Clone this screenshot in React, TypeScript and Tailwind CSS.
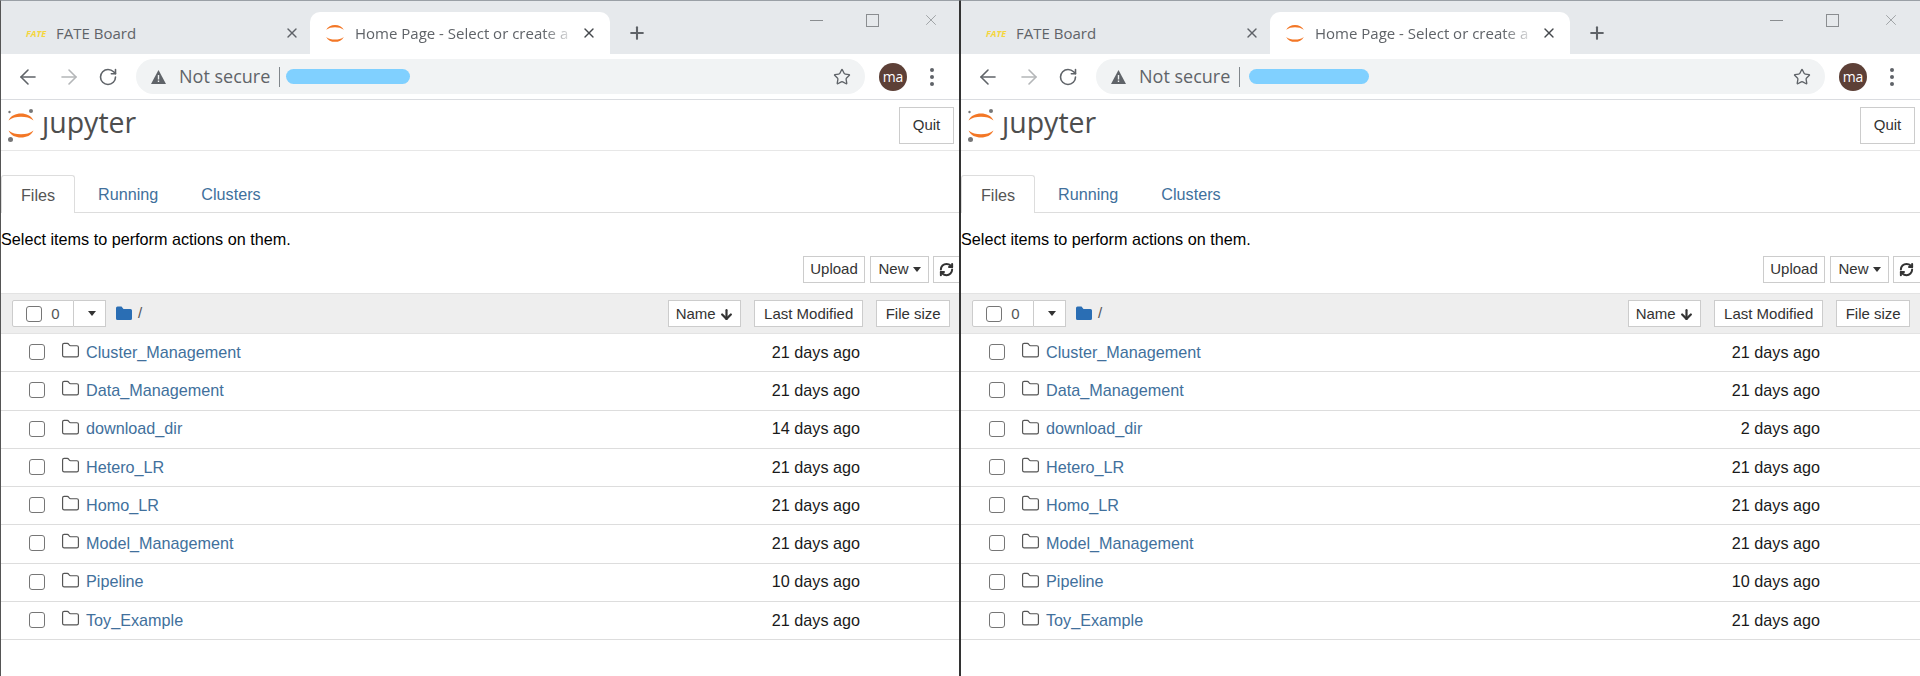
import { ArrowDown, ArrowLeft, ArrowRight, Folder, Plus, RefreshCw, RotateCw, Star, X } from "lucide-react";

const UI_FONT = "font-['Open_Sans','Noto_Sans',sans-serif]";

function JupyterMark({ width, height, dots = false }: { width: number; height: number; dots?: boolean }) {
  return (
    <svg width={width} height={height} viewBox="0 0 28 34" className="shrink-0">
      <path d="M1.5 12.5C4 7.5 8.5 5.5 14 5.5S24 7.500 26.500 12.500C23 9.600 19 8.700 14 8.700S5 9.600 1.500 12.500Z" fill="#f37726" />
      <path d="M1.500 22.500C4 27.500 8.500 29.500 14 29.500S24 27.500 26.500 22.500C23 25.400 19 26.300 14 26.300S5 25.400 1.500 22.500Z" fill="#f37726" />
      {dots && (
        <>
          <circle cx="24" cy="3" r="2" fill="#767677" />
          <circle cx="2.500" cy="4" r="1.200" fill="#767677" />
          <circle cx="3.500" cy="31.500" r="2.500" fill="#767677" />
        </>
      )}
    </svg>
  );
}

function Tabs() {
  return (
    <div className={`flex h-[53px] shrink-0 bg-[#e6e9ec] text-[15px] text-[#5f6368] ${UI_FONT}`}>
      <div className="flex h-[42px] w-[309px] shrink-0 items-center self-end pl-[25px]">
        <span className="w-[20px] text-[9px] leading-none font-bold text-[#f5d63d] italic">FATE</span>
        <span className="ml-[10px]">FATE Board</span>
        <X size={16} strokeWidth={2} className="ml-auto mr-[10px]" />
      </div>
      <div className="flex h-[42px] w-[300px] shrink-0 items-center self-end rounded-t-[10px] bg-white pl-[15px]">
        <JupyterMark width={20} height={24} />
        <span className="ml-[10px] w-[221px] overflow-hidden whitespace-nowrap [mask-image:linear-gradient(to_right,black_85%,transparent)]">
          Home Page - Select or create a
        </span>
        <X size={16} strokeWidth={2} className="ml-[5px] text-[#45484c]" />
      </div>
      <Plus size={20} strokeWidth={2.5} className="ml-[17px] mt-[22px]" />
      <div className="ml-[163px] flex h-[38px] items-center text-[#8a8d90]">
        <div className="h-px w-[13px] bg-[#8a8d90]" />
        <div className="ml-[43px] h-[13px] w-[13px] border border-[#8a8d90]" />
        <X size={18} strokeWidth={1} className="ml-[43px]" />
      </div>
    </div>
  );
}

function AddressBar({ blur }: { blur: string }) {
  return (
    <div className={`flex h-[46px] shrink-0 items-center border-b border-[#dadce0] bg-white text-[#5f6368] ${UI_FONT}`}>
      <ArrowLeft size={24} strokeWidth={1.6} className="ml-[15px]" />
      <ArrowRight size={24} strokeWidth={1.6} className="ml-[17px] text-[#b4b6b8]" />
      <RotateCw size={20} strokeWidth={1.9} className="ml-[17px]" />
      <div className="ml-[18px] flex h-[35px] w-[729px] items-center rounded-full bg-[#f1f3f4] pl-[15px]">
        <svg width="15" height="14" viewBox="0 0 15 14" className="shrink-0">
          <path d="M7.500 0L15 14H0Z" fill="#5f6368" />
          <path d="M6.800 5H8.200V9.500H6.800ZM6.800 10.500H8.200V12H6.800Z" fill="#f1f3f4" />
        </svg>
        <span className="ml-[13px] text-[18px] whitespace-nowrap">Not secure</span>
        <div className="ml-[9px] h-[20px] w-px bg-[#80868b]" />
        <div className={`h-[15px] rounded-full bg-[#80d0ff] ${blur}`} />
        <Star size={18} strokeWidth={1.8} className="ml-auto mr-[14px]" />
      </div>
      <div className="ml-[14px] flex size-[28px] items-center justify-center rounded-full bg-[#5d4037] text-[14px] text-white">ma</div>
      <div className="ml-[23px] flex flex-col gap-[3px]">
        <div className="size-[4px] rounded-full bg-[#5f6368]" />
        <div className="size-[4px] rounded-full bg-[#5f6368]" />
        <div className="size-[4px] rounded-full bg-[#5f6368]" />
      </div>
    </div>
  );
}

function Btn({ className, children }: { className: string; children: React.ReactNode }) {
  return (
    <div className={`flex h-[27px] shrink-0 items-center justify-center border border-[#cccccc] bg-white text-[15px] text-[#333333] ${className}`}>
      {children}
    </div>
  );
}

function Caret() {
  return <span className="ml-[4px] h-0 w-0 border-x-[4.5px] border-t-[5px] border-x-transparent border-t-[#333333]" />;
}

function Panel({ blur, downloadAge, className }: { blur: string; downloadAge: string; className: string }) {
  const rows = [
    ["Cluster_Management", "21 days ago"],
    ["Data_Management", "21 days ago"],
    ["download_dir", downloadAge],
    ["Hetero_LR", "21 days ago"],
    ["Homo_LR", "21 days ago"],
    ["Model_Management", "21 days ago"],
    ["Pipeline", "10 days ago"],
    ["Toy_Example", "21 days ago"],
  ];

  return (
    <div className={`flex h-[676px] w-[960px] shrink-0 flex-col overflow-hidden border-t border-[#9aa0a6] bg-white font-['Liberation_Sans',sans-serif] ${className}`}>
      <Tabs />
      <AddressBar blur={blur} />

      {/* Jupyter header */}
      <div className="flex h-[51px] shrink-0 items-center border-b border-[#e7e7e7] pl-[6px] pr-[5px]">
        <JupyterMark width={28} height={34} dots />
        <span className={`ml-[7px] -mt-[5px] text-[28.500px] leading-none text-[#4e4e4e] ${UI_FONT}`}>ȷupyter</span>
        <Btn className="ml-auto h-[37px] w-[55px]">Quit</Btn>
      </div>

      {/* Tab strip */}
      <div className="mt-[24px] flex h-[38px] shrink-0 border-b border-[#dddddd] text-[16.200px] text-[#41709c]">
        <div className="flex h-[38px] w-[74px] items-center justify-center rounded-t-[3px] border-x border-t border-[#dddddd] bg-white pt-[2px] text-[#555555]">Files</div>
        <div className="ml-[23px] flex h-[37px] items-center pt-[2px]">Running</div>
        <div className="ml-[43px] flex h-[37px] items-center pt-[2px]">Clusters</div>
      </div>

      <p className="mt-[16px] text-[16.200px] leading-[20px] text-black">Select items to perform actions on them.</p>

      <div className="mt-[7px] flex shrink-0 items-center pl-[802px]">
        <Btn className="w-[62px]">Upload</Btn>
        <Btn className="ml-[5px] w-[59px]">
          New
          <Caret />
        </Btn>
        <Btn className="ml-[4px] w-[40px] justify-start pl-[5px]">
          <RefreshCw size={15} strokeWidth={3.2} />
        </Btn>
      </div>

      {/* List header */}
      <div className="mt-[10px] flex h-[41px] shrink-0 items-center border-y border-[#e3e3e3] bg-[#eeeeee] pl-[11px]">
        <Btn className="w-[62px] rounded-l-[2px] pt-[1px] text-[#555555]">
          <input type="checkbox" readOnly className="mr-[9px] size-[16px] appearance-none rounded-[3px] border border-[#767676] bg-white" />0
        </Btn>
        <Btn className="w-[32px] border-l-0">
          <Caret />
        </Btn>
        <svg width="16" height="14" viewBox="0 0 16 14" className="ml-[10px] -mt-[1px]">
          <path d="M0 2a1.500 1.500 0 0 1 1.500-1.500H5.500L7.500 3H14.500A1.500 1.500 0 0 1 16 4.500V12.500A1.500 1.500 0 0 1 14.500 14H1.500A1.500 1.500 0 0 1 0 12.500Z" fill="#2a6eb4" />
        </svg>
        <span className="ml-[6px] text-[15px] text-[#555555]">/</span>
        <Btn className="ml-[526px] w-[73px] pt-[1px]">
          Name
          <ArrowDown size={15} strokeWidth={3.5} className="ml-[3px]" />
        </Btn>
        <Btn className="ml-[13px] w-[109px] pt-[1px]">Last Modified</Btn>
        <Btn className="ml-[13px] w-[74px] pt-[1px]">File size</Btn>
      </div>

      {/* File rows */}
      {rows.map(([name, age]) => (
        <div key={name} className="flex h-[38.250px] shrink-0 items-center border-b border-[#dddddd] pb-[1px] pl-[28px] text-[16.200px]">
          <input type="checkbox" readOnly className="size-[16px] appearance-none rounded-[3px] border border-[#767676] bg-white" />
          <Folder size={19} strokeWidth={1.5} className="ml-[16px] -mt-[3px] text-[#555555]" />
          <span className="ml-[6px] w-[649px] text-[#41709c]">{name}</span>
          <span className="w-[125px] text-right text-[#1a1a1a]">{age}</span>
        </div>
      ))}
    </div>
  );
}

export default function App() {
  return (
    <div className="flex h-[676px] w-[1920px] overflow-hidden bg-white">
      <Panel blur="w-[124px] ml-[6px]" downloadAge="14 days ago" className="border-x border-l-[#555555] border-r-[#333333]" />
      <Panel blur="w-[120px] ml-[9px]" downloadAge="2 days ago" className="border-l border-l-[#333333]" />
    </div>
  );
}
